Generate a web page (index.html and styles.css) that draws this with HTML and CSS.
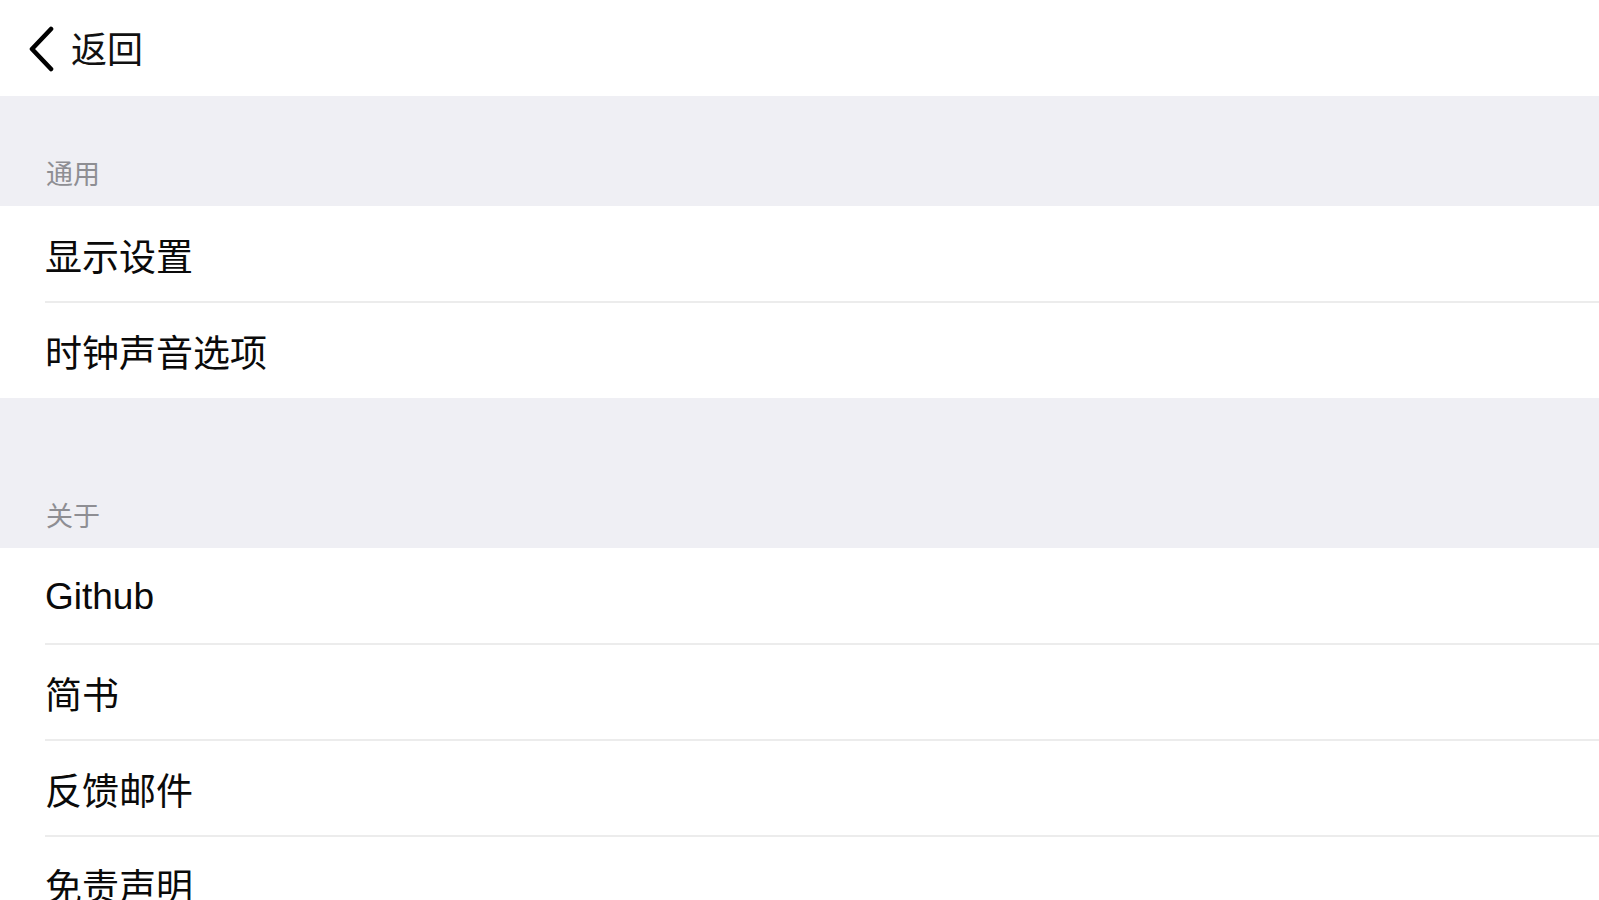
FILE: index.html
```html
<!DOCTYPE html>
<html lang="zh-CN">
<head>
<meta charset="utf-8">
<title>设置</title>
<link rel="stylesheet" href="styles.css">
</head>
<body>
<header class="nav">
  <a class="back">
    <svg class="chev" width="28" height="46" viewBox="0 0 28 46"><path d="M24 3 L5 23 L24 43" fill="none" stroke="#000" stroke-width="4.6" stroke-linecap="round" stroke-linejoin="round"/></svg>
    <span class="back-text">返回</span>
  </a>
</header>
<main>
  <div class="sec-head first"><span>通用</span></div>
  <ul class="group">
    <li class="row">显示设置</li>
    <li class="row">时钟声音选项</li>
  </ul>
  <div class="sec-head second"><span>关于</span></div>
  <ul class="group">
    <li class="row">Github</li>
    <li class="row">简书</li>
    <li class="row">反馈邮件</li>
    <li class="row">免责声明</li>
  </ul>
</main>
</body>
</html>
```

FILE: styles.css
```css
html, body {
  margin: 0;
  padding: 0;
  background: #ffffff;
  font-family: "Liberation Sans", "Noto Sans CJK SC", sans-serif;
  color: #000000;
  overflow: hidden;
  height: 900px;
}

.nav {
  height: 96px;
  display: flex;
  align-items: center;
  padding-left: 27px;
  background: #ffffff;
}

.back {
  display: flex;
  align-items: center;
  gap: 16px;
}

.chev {
  display: block;
  margin-top: 1px;
}

.back-text {
  font-size: 36px;
  line-height: 40px;
  margin-top: 6px;
  color: #111;
}

.sec-head {
  background: #efeff4;
  display: flex;
  align-items: flex-end;
  padding-left: 46px;
  box-sizing: border-box;
  padding-bottom: 16px;
}

.sec-head span {
  font-size: 27px;
  line-height: 30px;
  color: #8e8e93;
}

.sec-head.first { height: 110px; }
.sec-head.second { height: 150px; }

.group {
  list-style: none;
  margin: 0;
  padding: 0;
  background: #ffffff;
}

.row {
  position: relative;
  height: 96px;
  box-sizing: border-box;
  padding-top: 2px;
  display: flex;
  align-items: center;
  padding-left: 45px;
  font-size: 37px;
  color: #0a0a0a;
}

.row:not(:last-child)::after {
  content: "";
  position: absolute;
  left: 45px;
  right: 0;
  bottom: -1px;
  height: 2px;
  background: #ececec;
}
```
